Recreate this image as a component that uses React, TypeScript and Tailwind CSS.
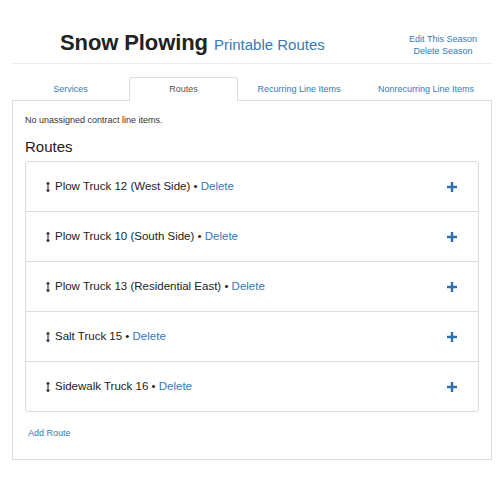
const routes = [
  'Plow Truck 12 (West Side)',
  'Plow Truck 10 (South Side)',
  'Plow Truck 13 (Residential East)',
  'Salt Truck 15',
  'Sidewalk Truck 16',
]

const tabs = [
  { label: 'Services', width: 'w-[117px]' },
  { label: 'Routes', width: 'w-[109px]', active: true },
  { label: 'Recurring Line Items', width: 'w-[122px]' },
  { label: 'Nonrecurring Line Items', width: 'flex-1' },
]

function ResizeIcon() {
  return (
    <svg width="6" height="12" viewBox="0 0 6 12" aria-hidden="true" className="shrink-0">
      <path d="M3 2.5v7" stroke="#333" strokeWidth="1.2" />
      <path d="M0.8 3.2 3 0.6 5.2 3.2Z M0.8 8.8 3 11.4 5.2 8.8Z" fill="#333" />
    </svg>
  )
}

function PlusIcon() {
  return (
    <svg width="10" height="10" viewBox="0 0 10 10" aria-hidden="true">
      <path d="M3.8 0h2.4v3.8H10v2.4H6.2V10H3.8V6.2H0V3.8h3.8Z" fill="#2f6fb0" />
    </svg>
  )
}

export default function App() {
  return (
    <div className="min-h-[500px] w-[500px] bg-white font-['Liberation_Sans',Arial,sans-serif] text-[#333]">
      <div className="mx-3 w-[480px]">
        {/* Header */}
        <header className="flex h-[64px] items-start justify-between border-b border-[#eee] pt-[29px]">
          <div className="flex items-baseline gap-[6px] pl-[48px] leading-[28px]">
            <h1 className="text-[22px] font-bold tracking-[-0.1px] text-[#222]">Snow Plowing</h1>
            <a className="text-[15px] text-[#337ab7]">Printable Routes</a>
          </div>
          <div className="mr-[9px] flex w-[80px] flex-col items-center pt-[4px] text-[9px] leading-[12px] text-[#337ab7]">
            <a>Edit This Season</a>
            <a>Delete Season</a>
          </div>
        </header>

        {/* Tabs */}
        <nav className="mt-[13px] flex h-[24px] text-[9px]">
          {tabs.map((tab) =>
            tab.active ? (
              <div
                key={tab.label}
                className={`${tab.width} flex items-center justify-center rounded-t-[3px] border border-b-0 border-[#ddd] bg-white pt-[1px] text-[#555]`}
              >
                {tab.label}
              </div>
            ) : (
              <div
                key={tab.label}
                className={`${tab.width} flex items-center justify-center border-b border-[#ddd] pt-[2px] text-[#337ab7]`}
              >
                {tab.label}
              </div>
            ),
          )}
        </nav>

        {/* Panel */}
        <section className="border-x border-b border-[#ddd] px-[12px] pt-[13px] pb-[20px]">
          <p className="text-[9px] leading-[12px]">No unassigned contract line items.</p>
          <h2 className="mt-[12px] mb-[5px] text-[15px] font-medium leading-[18px] text-[#222]">Routes</h2>

          <ul className="rounded-[3px] border border-[#ddd]">
            {routes.map((name, i) => (
              <li
                key={name}
                className={`flex items-center justify-between pr-[21px] pl-[19px] ${i > 0 ? 'h-[50px] border-t border-[#ddd]' : 'h-[49px]'}`}
              >
                <div className="flex items-center gap-[4px] text-[11.5px] text-[#222]">
                  <ResizeIcon />
                  <span>
                    {name} • <a className="text-[#337ab7]">Delete</a>
                  </span>
                </div>
                <PlusIcon />
              </li>
            ))}
          </ul>

          <a className="mt-[15px] ml-[3px] block text-[9px] leading-[12px] text-[#337ab7]">Add Route</a>
        </section>
      </div>
    </div>
  )
}
